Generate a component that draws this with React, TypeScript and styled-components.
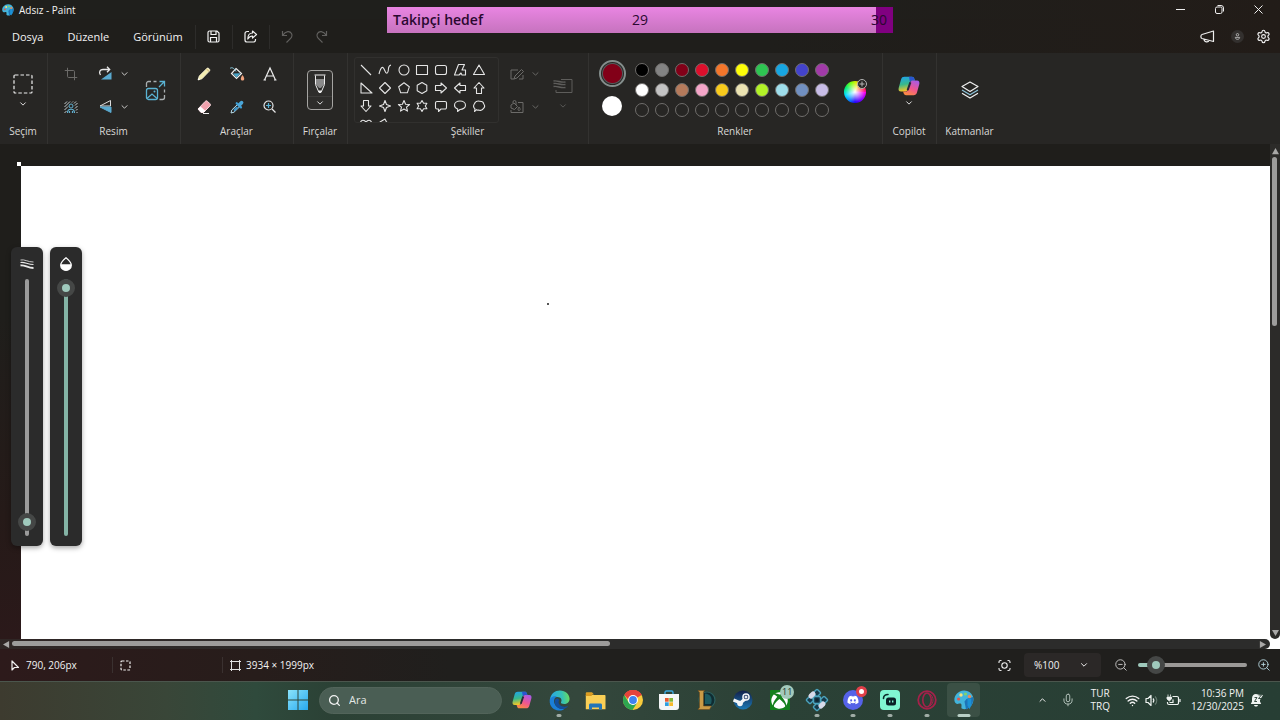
import React from "react";
import styled, { createGlobalStyle, css } from "styled-components";
import { Crop, ZoomIn, ZoomOut, Search, Settings, Mic, Wifi } from "lucide-react";
import { FaDiscord, FaXbox } from "react-icons/fa";

const GlobalStyle = createGlobalStyle`
  *, *::before, *::after { box-sizing: border-box; }
  body {
    margin: 0;
    background: #1f1e1b;
    color: #f2f2f2;
    font-family: "Open Sans", "Noto Sans", sans-serif;
    font-size: 10px;
    line-height: 14px;
    overflow: hidden;
  }
  button, select, input { font: inherit; color: inherit; margin: 0; }
`;

const Window = styled.div`
  position: relative;
  display: flex;
  flex-direction: column;
  height: 100vh;
`;

const Svg = styled.svg<{ $w?: number; $h?: number }>`
  display: block;
  flex: none;
  width: ${(p) => p.$w ?? 16}px;
  height: ${(p) => p.$h ?? p.$w ?? 16}px;
  overflow: visible;
`;

const PlainButton = styled.button`
  display: flex;
  align-items: center;
  justify-content: center;
  padding: 0;
  border: 0;
  background: none;
`;

/* ---------- title and menu bars ---------- */

const TitleBar = styled.header`
  display: flex;
  align-items: center;
  height: 19px;
  flex: none;
  padding-left: 2px;
  gap: 5px;
  background: linear-gradient(90deg, #1f1f1c 60%, #221c18);
`;

const AppTitle = styled.h1`
  margin: 0;
  flex: 1;
  font-size: 10px;
  line-height: 14px;
  font-weight: 400;
`;

const CaptionButton = styled(PlainButton)`
  width: 39px;
  height: 19px;
`;

const CaptionGroup = styled.div`
  display: flex;
  padding-right: 2px;
`;

const MenuBar = styled.nav`
  display: flex;
  align-items: center;
  flex: none;
  height: 34px;
  padding-top: 1px;
  background: linear-gradient(90deg, #1f1e1b 60%, #221c18);
`;

const MenuButton = styled(PlainButton)`
  height: 30px;
  padding: 0 12px;
  font-size: 11px;
  line-height: 16px;
`;

const QuickGroup = styled.div`
  display: flex;
  flex: 1;
`;

const QuickButton = styled(PlainButton)<{ $wide?: boolean; $divided?: boolean; $dim?: boolean }>`
  width: ${(p) => (p.$wide ? 37 : 31)}px;
  height: 24px;
  border-left: ${(p) => (p.$divided ? "1px solid #2d2c2a" : "0")};
  color: ${(p) => (p.$dim ? "#62615f" : "#f2f2f2")};
`;

const AccountGroup = styled.div`
  display: flex;
  align-items: center;
  gap: 12px;
  padding-right: 9px;
`;

const Avatar = styled(PlainButton)`
  width: 13px;
  height: 13px;
  margin-left: 4px;
  border-radius: 50%;
  background: #33302e;
`;

/* ---------- follower goal overlay ---------- */

const Goal = styled.div`
  position: absolute;
  z-index: 5;
  top: 7px;
  left: 50%;
  width: 506px;
  height: 26px;
  transform: translateX(-50%);
  background: #800080;
  color: #2a0830;
  font-size: 14px;
  line-height: 26px;
`;

const GoalFill = styled.div`
  height: 100%;
  background: linear-gradient(#e985e2, #c673be);
`;

const GoalText = styled.div`
  position: absolute;
  inset: 0;
  display: grid;
  grid-template-columns: 1fr auto 1fr;
  padding: 0 6px;

  strong { font-weight: 600; }
  span:last-child { text-align: right; }
`;

/* ---------- ribbon ---------- */

const Ribbon = styled.section`
  display: flex;
  flex: none;
  height: 91px;
  background: #272624;
`;

const Group = styled.div<{ $width: number; $last?: boolean }>`
  display: flex;
  flex-direction: column;
  flex: none;
  width: ${(p) => p.$width}px;
  padding: ${(p) => (p.$last ? "0 0 5px" : "0 1px 5px 0")};
  border-right: ${(p) => (p.$last ? "0" : "1px solid #333230")};
`;

const GroupBody = styled.div`
  display: flex;
  justify-content: center;
  flex: 1;
`;

const GroupLabel = styled.div`
  text-align: center;
  line-height: 16px;
  color: #dad9d7;
`;

const StackButton = styled(PlainButton)<{ $top?: number; $gap?: number }>`
  flex-direction: column;
  justify-content: flex-start;
  align-self: stretch;
  padding-top: ${(p) => p.$top ?? 20}px;
  gap: ${(p) => p.$gap ?? 6}px;
`;

const ToolGrid = styled.div<{ $columns: string }>`
  display: grid;
  grid-template-columns: ${(p) => p.$columns};
  grid-template-rows: 33px 33px;
  padding-top: 4px;
`;

const ToolButton = styled(PlainButton)<{ $tall?: boolean; $dim?: boolean }>`
  grid-row: ${(p) => (p.$tall ? "1 / 3" : "auto")};
  grid-column: ${(p) => (p.$tall ? "-2" : "auto")};
  color: ${(p) => (p.$dim ? "#6c6b69" : "#d2d1d0")};
`;

const BrushButton = styled(PlainButton)`
  flex-direction: column;
  width: 26px;
  height: 40px;
  margin-top: 17px;
  border: 1px solid #a5a4a2;
  border-radius: 4px;
  background: #2e2d2b;
`;

const BrushTop = styled.span`
  display: flex;
  align-items: center;
  justify-content: center;
  width: 100%;
  height: 26px;
  border-bottom: 1px solid #3c3b39;
`;

const BrushBottom = styled.span`
  display: flex;
  align-items: center;
  justify-content: center;
  height: 12px;
`;

const ShapesRow = styled.div`
  display: flex;
  flex: 1;
  padding-left: 6px;
`;

const ShapeBox = styled.div`
  display: grid;
  grid-template-columns: repeat(7, 1fr);
  grid-auto-rows: 18px;
  width: 145px;
  height: 66px;
  margin-top: 4px;
  padding: 3px 10px 0 2px;
  overflow: hidden;
  border: 1px solid #31302e;
  border-radius: 3px;
`;

const ShapeOptions = styled.div`
  margin-left: 8px;
`;

const EffectButton = styled(StackButton)`
  width: 30px;
  margin-left: 5px;
  color: #5e5d5b;
`;

const ColorRow = styled.div`
  display: flex;
  flex: 1;
  padding: 7px 0 0 9px;
`;

const CurrentColors = styled.div`
  display: flex;
  flex-direction: column;
  align-items: center;
  gap: 9px;
  width: 28px;
`;

const CurrentColor = styled.button<{ $color: string; $active?: boolean }>`
  padding: 0;
  border: 0;
  border-radius: 50%;
  background: ${(p) => p.$color};
  width: 20px;
  height: 20px;
  ${(p) =>
    p.$active &&
    css`
      width: 27px;
      height: 27px;
      border: 2px solid #848e8c;
      background: radial-gradient(circle, ${p.$color} 0 9px, #55595a 10px, #272624 11px);
    `}
`;

const Palette = styled.div`
  display: grid;
  grid-template-columns: repeat(10, 20px);
  grid-template-rows: repeat(3, 20px);
  place-items: center;
  margin-left: 6px;
`;

const Swatch = styled.button<{ $color?: string }>`
  width: 14px;
  height: 14px;
  padding: 0;
  border: 1px solid #6f6d6b;
  border-radius: 50%;
  background: ${(p) => p.$color ?? "transparent"};
`;

const WheelButton = styled(PlainButton)`
  position: relative;
  width: 24px;
  height: 26px;
  margin: 19px 0 0 11px;
`;

const Wheel = styled.span`
  width: 22px;
  height: 22px;
  border-radius: 50%;
  background:
    radial-gradient(circle, #fff 0, rgba(255, 255, 255, 0) 65%),
    conic-gradient(from 90deg, #f0e, #80f, #20f 25%, #08f, #0df 45%, #0e6, #8f0 70%, #fd0, #f40 90%, #f0a);
`;

const WheelPlus = styled.span`
  position: absolute;
  top: 0;
  right: 0;
`;

/* ---------- canvas ---------- */

const Workspace = styled.main`
  display: grid;
  grid-template-columns: 1fr 10px;
  grid-template-rows: 1fr 10px;
  flex: 1;
  min-height: 0;
  background: #fff;
`;

const Viewport = styled.div`
  position: relative;
  display: flex;
  padding: 22px 0 0 21px;
  background: linear-gradient(#1f1e1b 35%, #251a18 75%, #2b191a);
`;

const Paper = styled.div`
  position: relative;
  flex: 1;
  background: #fff;
`;

const PaperHandle = styled.span`
  position: absolute;
  top: -4px;
  left: -4px;
  width: 4px;
  height: 4px;
  background: #fff;
`;

const InkDot = styled.span`
  position: absolute;
  top: 137px;
  left: 526px;
  width: 2px;
  height: 2px;
  background: #555;
`;

const SliderPanels = styled.div`
  position: absolute;
  top: 103px;
  left: 11px;
  display: flex;
  gap: 7px;
`;

const SliderPanel = styled.label`
  display: flex;
  flex-direction: column;
  align-items: center;
  gap: 8px;
  width: 32px;
  height: 299px;
  padding: 10px 0;
  border-radius: 6px;
  background: #2b2b2b;
  box-shadow: 0 2px 5px rgba(0, 0, 0, 0.35);
`;

const thumb = css`
  appearance: none;
  width: 18px;
  height: 18px;
  border: 5px solid #454746;
  border-radius: 50%;
  background: #9fc9bc;
`;

const VerticalRange = styled.input<{ $filled?: boolean }>`
  appearance: none;
  writing-mode: vertical-lr;
  direction: rtl;
  flex: 1;
  width: 18px;
  min-height: 0;
  background: none;

  &::-webkit-slider-runnable-track {
    width: 4px;
    border-radius: 2px;
    background: ${(p) => (p.$filled ? "#84b3a5" : "#9b9b9b")};
  }
  &::-webkit-slider-thumb {
    ${thumb}
    margin-left: -7px;
  }
`;

const ZoomRange = styled.input`
  appearance: none;
  width: 109px;
  height: 18px;
  background: none;

  &::-webkit-slider-runnable-track {
    height: 4px;
    border-radius: 2px;
    background: linear-gradient(90deg, #9fc9bc 17%, #9b9997 17%);
  }
  &::-webkit-slider-thumb {
    ${thumb}
    margin-top: -7px;
  }
`;

const ScrollTrack = styled.div<{ $vertical?: boolean }>`
  display: flex;
  flex-direction: ${(p) => (p.$vertical ? "column" : "row")};
  justify-content: space-between;
  align-items: center;
  padding: ${(p) => (p.$vertical ? "4px 0 3px" : "0 4px 0 3px")};
  gap: 2px;
  background: ${(p) => (p.$vertical ? "#2c2b29" : "linear-gradient(90deg, #2f2625, #2c2c2b 30%)")};
  border-radius: ${(p) => (p.$vertical ? "0 0 5px 5px" : "0 5px 5px 0")};
`;

const ScrollLane = styled.div`
  display: flex;
  flex: 1;
  align-self: stretch;
  align-items: flex-start;
  justify-content: flex-start;
`;

const ScrollThumb = styled.div<{ $vertical?: boolean }>`
  border-radius: 3px;
  background: #9d9c9b;
  ${(p) =>
    p.$vertical
      ? css`width: 5px; height: 36%; margin-left: 2px;`
      : css`height: 5px; width: 48%; margin-top: 2px;`}
`;

/* ---------- status bar ---------- */

const StatusBar = styled.footer`
  display: flex;
  align-items: center;
  flex: none;
  height: 32px;
  background: linear-gradient(90deg, #2d1a1b, #271d1b 20%, #201f1d 35%);
`;

const StatusCell = styled.div<{ $width: number; $divided?: boolean }>`
  display: flex;
  align-items: center;
  gap: ${(p) => (p.$divided ? 5 : 6)}px;
  width: ${(p) => p.$width}px;
  height: 16px;
  padding-left: ${(p) => (p.$divided ? 7 : 9)}px;
  border-left: ${(p) => (p.$divided ? "1px solid #3a3130" : "0")};
  white-space: nowrap;
`;

const StatusRight = styled.div`
  display: flex;
  align-items: center;
  margin-left: auto;
  padding-right: 9px;
  gap: 10px;
`;

const ZoomSelectWrap = styled.span`
  position: relative;
  display: flex;
  align-items: center;
  margin: 0 3px;
`;

const ZoomSelect = styled.select`
  appearance: none;
  width: 77px;
  height: 24px;
  padding: 0 10px;
  border: 0;
  border-radius: 4px;
  background: #2b2827;
`;

const SelectArrow = styled.span`
  position: absolute;
  right: 13px;
  pointer-events: none;
`;

/* ---------- taskbar ---------- */

const Taskbar = styled.footer`
  display: grid;
  grid-template-columns: 1fr auto 1fr;
  align-items: center;
  flex: none;
  height: 39px;
  padding: 0 17px 2px 0;
  border-top: 1px solid #4b564d;
  background: linear-gradient(90deg, #3d3b2f, #394638 13%, #2f4a3c 20%, #2b4135 26%, #34473c 45%, #2b4136 60%, #273e34);
`;

const TaskCluster = styled.div`
  display: flex;
  align-items: center;
  grid-column: 2;
`;

const StartButton = styled(PlainButton)`
  width: 34px;
  height: 32px;
  margin-right: 4px;
`;

const SearchBox = styled.label`
  display: flex;
  align-items: center;
  gap: 8px;
  width: 183px;
  height: 27px;
  padding: 0 8px;
  border: 1px solid #52645a;
  border-radius: 14px;
  background: #4a5e54;

  input {
    flex: 1;
    min-width: 0;
    padding: 0;
    border: 0;
    outline: 0;
    background: none;
    font-size: 11px;
  }
  input::placeholder { color: #e3e8e5; opacity: 1; }
`;

const AppStrip = styled.div`
  display: grid;
  grid-template-columns: repeat(13, 1fr);
  width: 478px;
  margin-left: 2px;
`;

const TaskApp = styled(PlainButton)<{ $running?: boolean; $active?: boolean }>`
  position: relative;
  justify-self: center;
  width: 33px;
  height: 34px;
  border-radius: 4px;
  background: ${(p) => (p.$active ? "#3b5045" : "none")};

  &::after {
    content: "";
    position: absolute;
    bottom: 0;
    left: 50%;
    display: ${(p) => (p.$running || p.$active ? "block" : "none")};
    width: ${(p) => (p.$active ? 13 : 5)}px;
    height: 3px;
    transform: translateX(-50%);
    border-radius: 2px;
    background: ${(p) => (p.$active ? "#b9cfc6" : "#a0aca6")};
  }
`;

const Badge = styled.span<{ $red?: boolean }>`
  position: absolute;
  top: ${(p) => (p.$red ? 3 : 2)}px;
  right: ${(p) => (p.$red ? 3 : 2)}px;
  display: flex;
  align-items: center;
  justify-content: center;
  width: ${(p) => (p.$red ? 11 : 14)}px;
  height: ${(p) => (p.$red ? 11 : 14)}px;
  border: ${(p) => (p.$red ? "3px solid #e0404a" : "0")};
  border-radius: 50%;
  background: ${(p) => (p.$red ? "#fff" : "#a3c9bb")};
  color: #22352c;
  font-size: 9px;
  line-height: 12px;
`;

const Tray = styled.div`
  display: flex;
  align-items: center;
  justify-self: end;
  gap: 6px;
`;

const TrayButton = styled(PlainButton)<{ $width?: number }>`
  width: ${(p) => p.$width ?? 14}px;
  height: 28px;
`;

const TrayText = styled.div<{ $end?: boolean }>`
  display: flex;
  flex-direction: column;
  align-items: ${(p) => (p.$end ? "flex-end" : "center")};
  margin: ${(p) => (p.$end ? "0" : "0 9px 0 5px")};
  line-height: 13px;
`;

/* ---------- drawings ---------- */

const Chevron = ({ up, size = 7 }: { up?: boolean; size?: number }) => (
  <Svg $w={size} $h={4} viewBox="0 0 8 5" fill="none" stroke="currentColor" strokeWidth="1.2">
    <path d={up ? "M.5 4.5 4 1l3.5 3.5" : "M.5.5 4 4 7.5.5"} />
  </Svg>
);

const PaintIcon = ({ size }: { size: number }) => (
  <Svg $w={size} viewBox="0 0 20 20">
    <path d="M10 .6C4 1 0 5.600 .4 10.500c.3 3 2.600 3.900 4.600 3.100 1.500-.6 2.600.1 2.500 1.500L7.400 18c.5 1.600 5.600 1.600 7.600-.5 4-2.500 5.500-8 3.700-11.500C17 2.500 14 .4 10 .6Z" fill="#42b4dc" />
    <path d="M12.500 9 19 7c1 5-1.500 9-4 10.500l-3 2-1.500-8Z" fill="#1d74b8" />
    <path d="M13.500 8.500h3.800v6.800l-1.800 4-2-4Z" fill="#1b92d6" />
    <circle cx="4.600" cy="9" r="1.600" fill="#e2574c" />
    <circle cx="7" cy="5" r="1.700" fill="#f5e27a" />
    <circle cx="11.500" cy="4" r="1.600" fill="#83d36a" />
    <circle cx="15.500" cy="6.500" r="1.700" fill="#e98a58" />
  </Svg>
);

const CopilotIcon = ({ size }: { size: number }) => (
  <Svg $w={size} viewBox="0 0 24 24">
    <defs>
      <linearGradient id="cpA" x1="0" y1="0" x2="0.2" y2="1">
        <stop offset="0" stopColor="#1ea2f0" />
        <stop offset=".55" stopColor="#37b98c" />
        <stop offset="1" stopColor="#f6c626" />
      </linearGradient>
      <linearGradient id="cpB" x1="0.8" y1="0" x2="0.3" y2="1">
        <stop offset="0" stopColor="#a65be8" />
        <stop offset=".55" stopColor="#f0568f" />
        <stop offset="1" stopColor="#fb8a43" />
      </linearGradient>
    </defs>
    <path d="M7 2h8.200c1.600 0 2.200.8 2.700 2.300L18.500 6H16c-2 0-2.800 1-3.400 2.800l-2 6.700C10 17.500 9.200 18 7.500 18H3.300C.8 18 .2 16 .8 13.800l2.500-9C4 2.800 5 2 7 2Z" fill="url(#cpA)" />
    <path d="M12 2h3.300c1.500 0 2.200.8 2.600 2.300L18.500 6H16c-1.500 0-2.400.6-3 1.800Z" fill="#2a55cf" />
    <path d="M17 22H8.800c-1.600 0-2.200-.8-2.700-2.300L5.500 18H8c2 0 2.800-1 3.400-2.800l2-6.700C14 6.500 14.800 6 16.500 6h4.200c2.500 0 3.100 2 2.500 4.200l-2.500 9C20 21.200 19 22 17 22Z" fill="url(#cpB)" />
    <path d="m13.500 8-3 8.500" stroke="#252a38" strokeWidth="2.200" />
  </Svg>
);

const shapePaths: [string, string][] = [
  ["Çizgi", "M2 2l10 10"],
  ["Eğri", "M1 11C3 3 5 3 6.500 7s3.500 5 4-1.500c.1-2 .8-3 2.500-3.500"],
  ["Oval", "M7 2a5 5 0 1 0 0 10A5 5 0 1 0 7 2Z"],
  ["Dikdörtgen", "M1.500 2.500h11v9h-11Z"],
  ["Yuvarlatılmış dikdörtgen", "M3.500 2.500h7a2 2 0 0 1 2 2v5a2 2 0 0 1-2 2h-7a2 2 0 0 1-2-2v-5a2 2 0 0 1 2-2Z"],
  ["Çokgen", "M5.500 1.500h6l-2.500 5.500h3.500v5h-3.500l-1-2-2 2h-4.500Z"],
  ["Üçgen", "M7 2l5.500 9.500h-11Z"],
  ["Dik üçgen", "M2 2v10h11Z"],
  ["Elmas", "M7 1.500 12.500 7 7 12.500 1.500 7Z"],
  ["Beşgen", "M7 1.800l5.300 4-2 6h-6.600l-2-6Z"],
  ["Altıgen", "M7 1.500l4.800 2.700v5.600L7 12.500 2.200 9.800V4.200Z"],
  ["Sağ ok", "M1.500 4.500h5.500V2l5.500 5L7 12V9.500H1.500Z"],
  ["Sol ok", "M12.500 4.500H7V2L1.500 7 7 12V9.500h5.500Z"],
  ["Yukarı ok", "M4.500 12.500V7H2l5-5.500L12 7H9.500v5.500Z"],
  ["Aşağı ok", "M4.500 1.500V7H2l5 5.500L12 7H9.500V1.500Z"],
  ["Dört köşeli yıldız", "M7 1.500l1.500 4 4 1.500-4 1.500-1.500 4-1.500-4-4-1.500 4-1.500Z"],
  ["Beş köşeli yıldız", "M7 1.500l1.600 3.700 4 .3-3.100 2.600 1 4L7 10l-3.500 2.100 1-4L1.400 5.500l4-.3Z"],
  ["Altı köşeli yıldız", "M7 1.500l1.600 2.800h3.300L10.300 7l1.600 2.700H8.600L7 12.500 5.400 9.700H2.100L3.700 7 2.100 4.300h3.300Z"],
  ["Yuvarlak belirtme", "M3 2.500h8a1.500 1.500 0 0 1 1.500 1.500v4.500A1.500 1.500 0 0 1 11 10H7l-2.500 2.500V10H3a1.500 1.500 0 0 1-1.500-1.500V4A1.500 1.500 0 0 1 3 2.500Z"],
  ["Oval belirtme", "M7 2c3 0 5.500 1.800 5.500 4.200S10 10.500 7 10.500L4.500 12.500 4.700 10C2.800 9.300 1.500 8 1.500 6.200 1.500 3.800 4 2 7 2Z"],
  ["Bulut belirtme", "M2.500 12.500l.5-2.700C1.500 8.500 1.300 6.500 2.300 5 3 2.700 5.500 1.700 7.500 2.200c2-.1 4 1 4.300 2.800 1.100 1.500.8 3.500-.4 4.500-.9 1.700-3.400 2.300-4.900 1.500-1.100.3-1.600.2-1.900-.3Z"],
  ["Kalp", "M7 12.500 2 7.500C.5 5 3 2.500 5 3.500l2 1.200 2-1.200c2-1 4.500 1.500 3 4Z"],
  ["Şimşek", "M2 5l5-3 1.500 3 3 2-1 1 2 4-6-4 1-1-3-1Z"],
];

const ShapeIcon = ({ d }: { d: string }) => (
  <Svg $w={14} viewBox="0 0 14 14" fill="none" stroke="#e4e4e4" strokeWidth="1.100" strokeLinejoin="round">
    <path d={d} />
  </Svg>
);

const PencilIcon = () => (
  <Svg $w={16} viewBox="0 0 16 16">
    <path d="m2 14 1.200-4L11 2.200c1-1 3.600 1.400 2.700 2.600L6 12.800Z" fill="#f3ecb0" stroke="#fffbe0" strokeWidth=".7" />
    <path d="m10.500 3 2.700 2.600" stroke="#c8a970" />
    <path d="m2 14 .6-2 1.500 1.400Z" fill="#fff" />
  </Svg>
);

const BucketIcon = () => (
  <Svg $w={16} viewBox="0 0 16 16" fill="none">
    <path d="M7 2.500 12.500 7.500l-5 5L2.500 7.500Z" stroke="#eee" strokeWidth="1.200" />
    <path d="m4 7.500 7.500-.2L7.500 11.500Z" fill="#49a5c9" />
    <path d="M1 2.500c1.500-1.500 4-.8 6 3" stroke="#8ccbe0" />
    <path d="M13.500 9c2.800 3.800 1.700 5.500 0 5.500s-2.800-1.700 0-5.500Z" fill="#f0a37e" />
  </Svg>
);

const EraserIcon = () => (
  <Svg $w={16} viewBox="0 0 16 16">
    <path d="m2 10 7.200-7.600c.8-.8 1.600-.8 2.400 0l2.300 2.300c.8.8.8 1.600 0 2.400L7.500 13.500H5Z" fill="#f1a2ae" stroke="#f9d8dd" />
    <path d="m2 10 2.500-2.500 5 4.500-2 1.500H5Z" fill="#fff" />
    <path d="M7 14.500h6" stroke="#eee" />
  </Svg>
);

const DropperIcon = () => (
  <Svg $w={16} viewBox="0 0 16 16" fill="none">
    <path d="m2 14 .8-3L9 5l2.200 2.200-6.200 6Z" stroke="#b8dcea" />
    <path d="m4.500 10.500 3-3 2 1.500-4 3.500Z" fill="#3b94c9" />
    <path d="m7.700 4.200 4.300 4.200" stroke="#3d9fd6" strokeWidth="2.200" strokeLinecap="round" />
    <path d="m10.300 6 2.200-2.300" stroke="#4ba6d8" strokeWidth="3.800" strokeLinecap="round" />
  </Svg>
);

const RotateIcon = () => (
  <Svg $w={15} viewBox="0 0 15 15" fill="none">
    <path d="M2.500 9C.5 6 2 3.500 5 3.500h6.500M9 .8l2.700 2.700L9 6.200" stroke="#e8e8e8" strokeWidth="1.300" />
    <path d="M13.500 6v7.500H3Z" fill="#5aa9cf" />
  </Svg>
);

const FlipIcon = () => (
  <Svg $w={15} viewBox="0 0 15 15" fill="none">
    <path d="M12.500 1.500v5.500H2Z" stroke="#dcdcdc" strokeLinejoin="round" />
    <path d="M2 8h11v5.500Z" fill="#5aa9cf" stroke="#5aa9cf" strokeLinejoin="round" />
  </Svg>
);

const RemoveBgIcon = () => (
  <Svg $w={16} viewBox="0 0 16 16" fill="none" stroke="#c3cdd0" strokeWidth="1">
    <path d="m1.500 5 2.500-2.500M1.500 8l5.500-5.500M1.500 11l3.500-3.500M1.500 14l2-2M9 3.500l1-1M11 4.500l2-2M12 6.500l2.500-2.500M12 9.500l2.500-2.500M13 11.500l1.500-1.500M13.500 14l1-1" />
    <circle cx="8" cy="7" r="2" stroke="#62b0d0" />
    <path d="M4.500 14c0-5 7-5 7 0M6.500 12v2m3-2v2" stroke="#62b0d0" strokeWidth="1.200" />
  </Svg>
);

const ResizeIcon = () => (
  <Svg $w={21} viewBox="0 0 21 21" fill="none">
    <path d="M1.500 7V3.500a2 2 0 0 1 2-2H6m2.500 0h3m8 8v3m0 2.500v2.500a2 2 0 0 1-2 2h-3" stroke="#a9aeb0" strokeWidth="1.300" />
    <rect x="1.500" y="8.500" width="11" height="11" rx="2" stroke="#5ab3d3" strokeWidth="1.300" />
    <path d="m2 18.500 5-4.500 5 4.500M14 7l5-5m-4.500-.5h5v5" stroke="#5ab3d3" strokeWidth="1.300" />
    <circle cx="9.500" cy="11.500" r="1" fill="#5ab3d3" />
  </Svg>
);

const BrushIcon = () => (
  <Svg $w={14} $h={20} viewBox="0 0 14 20" fill="none" stroke="#ededed">
    <path d="M1.500 1h11M2.500 1.500v9L6 18.500h2l3.500-8v-9" />
    <path d="M3 5h8v5.800L7.800 14H6.200L3 10.800Z" fill="#8a8a8a" stroke="none" />
    <path d="m5.500 17 1.500 1.500L8.500 17Z" fill="#fff" />
  </Svg>
);

const LayersIcon = () => (
  <Svg $w={18} viewBox="0 0 18 18" fill="none" strokeWidth="1.200" strokeLinejoin="round">
    <path d="M9 1 17 5.500 9 10.500 1 5.500Z" stroke="#f0f0f0" />
    <path d="m1 9 8 4.800L17 9" stroke="#8dc5dc" />
    <path d="m1 12.300 8 4.800 8-4.800" stroke="#f0f0f0" />
  </Svg>
);

const SelectionIcon = ({ size, dash }: { size: number; dash: string }) => (
  <Svg $w={size} viewBox={`0 0 ${size} ${size}`} fill="none" stroke="#f0f0f0" strokeWidth="1.200">
    <rect x="1" y="1" width={size - 2} height={size - 2} rx="1" strokeDasharray={dash} />
  </Svg>
);

const Arrow = ({ d }: { d: string }) => (
  <Svg $w={7} viewBox="0 0 8 8" fill="#a9a8a7">
    <path d={d} />
  </Svg>
);

const EdgeIcon = () => (
  <Svg $w={21} viewBox="0 0 24 24">
    <defs>
      <linearGradient id="edA" x1="0" y1=".3" x2="1" y2=".2">
        <stop offset="0" stopColor="#2aa6e4" />
        <stop offset=".6" stopColor="#35c1b6" />
        <stop offset="1" stopColor="#6ddf58" />
      </linearGradient>
    </defs>
    <path d="M1 11C2 4 7 .5 12.500 .5 19 .5 23.500 5 23.500 10c0 4-3 6-6.200 6-2.500 0-4.300-1-3.500-2.300 1.400-2 .2-5.700-4.300-5.700C5.500 8 2 9.500 1 11Z" fill="url(#edA)" />
    <path d="M.8 12C1 8.500 5 6.500 9 7.500c-3 1.500-4 5-2.500 8.500 2 4.500 7 6.500 11.500 5-2 2-4.500 2.700-7 2.500C5 23 .5 18.500.8 12Z" fill="#1b7fd8" />
    <path d="M7 11c-1.500 4 1 9 6 10.300 4 1 7.500-.6 8.800-3-3 1.500-8.500 1.200-10.300-2.300-1-2-.5-3.500.3-4.500C11 9.500 8.500 9 7 11Z" fill="#124e9c" />
  </Svg>
);

const FolderIcon = () => (
  <Svg $w={21} viewBox="0 0 21 21">
    <path d="M.8 3.500c0-.8.5-1.300 1.200-1.300h5l2 2.300h-8Z" fill="#e0a326" />
    <path d="M.8 5h18.700c.6 0 1 .4 1 1v13.200H.8Z" fill="#f9cf56" />
    <path d="M.8 3.500h7L6.500 6H.8Z" fill="#d99a20" />
    <path d="M4 19.500V15c0-1 .6-1.600 1.500-1.600h10c1 0 1.500.6 1.500 1.600v4.500h-3v-2H7v2Z" fill="#2375b8" />
  </Svg>
);

const ChromeIcon = () => (
  <Svg $w={20} viewBox="0 0 20 20">
    <circle cx="10" cy="10" r="10" fill="#f8cb3c" />
    <path d="M10 10 1.300 5A10 10 0 0 1 18.700 5Z" fill="#e5433b" />
    <path d="M10 5h8.700A10 10 0 0 0 1.300 5l4.500 5Z" fill="#e5433b" />
    <path d="M1.300 5A10 10 0 0 0 9.500 20L14.300 12.500 10 14.500 5.700 12.500Z" fill="#2da650" />
    <circle cx="10" cy="10" r="5" fill="#fff" />
    <circle cx="10" cy="10" r="3.900" fill="#3f82ef" />
  </Svg>
);

const StoreIcon = () => (
  <Svg $w={20} viewBox="0 0 20 20">
    <path d="M6 5V2.500C6 1.500 6.500 1 7.500 1h5c1 0 1.500.5 1.500 1.500V5" fill="none" stroke="#3aa6dd" strokeWidth="1.400" />
    <path d="M0 4h20v13a3 3 0 0 1-3 3H3a3 3 0 0 1-3-3Z" fill="#f4f6f7" />
    <path d="M6 8h3.700v3.700H6Z" fill="#e8592f" />
    <path d="M10.300 8H14v3.700h-3.700Z" fill="#7fb536" />
    <path d="M6 12.300h3.700V16H6Z" fill="#2e9fe0" />
    <path d="M10.300 12.300H14V16h-3.700Z" fill="#f6b92b" />
  </Svg>
);

const LeagueIcon = () => (
  <Svg $w={20} viewBox="0 0 20 20">
    <circle cx="11" cy="10" r="8" fill="#0f2c32" stroke="#2c5f5e" strokeWidth="1.200" />
    <path d="M9 3.500c5 .5 8 4 6 10.500H9Z" fill="#1d5a60" />
    <path d="M2 .5h6.500L7.500 2v14h8L13.500 19.500H2L3.500 17.500V2.500Z" fill="#c99a47" stroke="#6d4c1c" strokeWidth=".6" />
  </Svg>
);

const SteamIcon = () => (
  <Svg $w={20} viewBox="0 0 20 20">
    <defs>
      <linearGradient id="stA" x1="0" y1="0" x2="0" y2="1">
        <stop offset="0" stopColor="#13204a" />
        <stop offset="1" stopColor="#1b78b4" />
      </linearGradient>
    </defs>
    <circle cx="10" cy="10" r="9.500" fill="url(#stA)" />
    <path d="m.5 10 7 3 5-4.500" stroke="#f2f4f7" strokeWidth="3.200" fill="none" />
    <circle cx="7" cy="13.500" r="2.800" fill="#f2f4f7" />
    <circle cx="13" cy="7" r="3.800" fill="#f2f4f7" />
    <circle cx="13" cy="7" r="2.300" fill="#1d315f" />
    <circle cx="13" cy="7" r="1.500" fill="#e9edf2" />
  </Svg>
);

const KnotIcon = () => (
  <Svg $w={22} viewBox="0 0 22 22">
    <g fill="#173a4a" stroke="#4ba3bd" strokeWidth="1.400">
      <rect x="8.200" y="1.200" width="5.600" height="5.600" rx="1" transform="rotate(45 11 4)" />
      <rect x="15.200" y="8.200" width="5.600" height="5.600" rx="1" transform="rotate(45 18 11)" />
      <rect x="8.200" y="15.200" width="5.600" height="5.600" rx="1" transform="rotate(45 11 18)" />
      <rect x="1.200" y="8.200" width="5.600" height="5.600" rx="1" transform="rotate(45 4 11)" />
      <rect x="7.500" y="7.500" width="7" height="7" rx="1.500" />
    </g>
    <rect x="2" y="3.500" width="8" height="5" rx="2.500" transform="rotate(-45 6 6)" fill="#d7dbea" />
    <rect x="12" y="13.500" width="8" height="5" rx="2.500" transform="rotate(-45 16 16)" fill="#d7dbea" />
    <circle cx="11" cy="11" r="1.700" fill="#0f2530" />
  </Svg>
);

const DiscordTile = styled.span`
  display: flex;
  align-items: center;
  justify-content: center;
  width: 20px;
  height: 20px;
  border-radius: 50%;
  background: #5562e8;
  color: #fff;
  font-size: 12px;
`;

const XboxTile = styled.span`
  display: flex;
  align-items: center;
  justify-content: center;
  width: 20px;
  height: 20px;
  border-radius: 1px;
  background: #14801c;
  color: #fff;
  font-size: 17px;
`;

const StreamlabsIcon = () => (
  <Svg $w={20} viewBox="0 0 20 20">
    <rect width="20" height="20" rx="4" fill="#80f5d2" />
    <path d="M3.500 8.500C3.500 6 5 4.500 8 4.500" fill="none" stroke="#0c2b2b" strokeWidth="1.600" strokeLinecap="round" />
    <rect x="6" y="7.500" width="10" height="8" rx="2.500" fill="#0a1f26" />
    <path d="M9.700 10.500v2m3-2v2" stroke="#80f5d2" strokeWidth="1.400" />
  </Svg>
);

const OperaIcon = () => (
  <Svg $w={20} viewBox="0 0 20 20" fill="none" stroke="#a5214a">
    <circle cx="10" cy="10" r="8.800" strokeWidth="1.800" />
    <ellipse cx="10" cy="10" rx="4.200" ry="7" strokeWidth="1.600" />
    <path d="M13 4c4 2.500 4 9.500 0 12" strokeWidth="1" />
  </Svg>
);

const WindowsIcon = () => (
  <Svg $w={20} viewBox="0 0 20 20">
    <defs>
      <linearGradient id="wn" x1="0" y1="0" x2="1" y2="1">
        <stop offset="0" stopColor="#8be3fb" />
        <stop offset="1" stopColor="#27a9ef" />
      </linearGradient>
    </defs>
    <path d="M0 0h9.500v9.500H0ZM10.500 0H20v9.500h-9.500ZM0 10.500h9.500V20H0ZM10.500 10.500H20V20h-9.500Z" fill="url(#wn)" />
  </Svg>
);

const colors: (string | undefined)[] = [
  "#000000", "#838383", "#820018", "#dd0f2c", "#f4762b", "#fdfd08", "#2ec552", "#17a6e2", "#4343cc", "#a13aa8",
  "#ffffff", "#c3c3c3", "#b57a5b", "#f4a5c8", "#f9cb1c", "#ebe3b2", "#b2f227", "#9fdeeb", "#7190c1", "#c8bde7",
  ...Array<undefined>(10).fill(undefined),
];

const taskApps: { name: string; icon: React.ReactNode; running?: boolean; active?: boolean }[] = [
  { name: "Copilot", icon: <CopilotIcon size={20} /> },
  { name: "Edge", icon: <EdgeIcon />, running: true },
  { name: "Dosya Gezgini", icon: <FolderIcon /> },
  { name: "Chrome", icon: <ChromeIcon /> },
  { name: "Store", icon: <StoreIcon /> },
  { name: "League of Legends", icon: <LeagueIcon /> },
  { name: "Steam", icon: <SteamIcon /> },
  { name: "Xbox", icon: <><XboxTile><FaXbox /></XboxTile><Badge>11</Badge></> },
  { name: "Uygulama", icon: <KnotIcon />, running: true },
  { name: "Discord", icon: <><DiscordTile><FaDiscord /></DiscordTile><Badge $red /></>, running: true },
  { name: "Streamlabs", icon: <StreamlabsIcon />, running: true },
  { name: "Opera GX", icon: <OperaIcon />, running: true },
  { name: "Paint", icon: <PaintIcon size={20} />, active: true },
];

/* ---------- page ---------- */

function RibbonBar() {
  return (
    <Ribbon>
      <Group $width={48}>
        <GroupBody>
          <StackButton aria-label="Seçim" $top={21} $gap={8}>
            <SelectionIcon size={20} dash="3.500 2" />
            <Chevron size={6} />
          </StackButton>
        </GroupBody>
        <GroupLabel>Seçim</GroupLabel>
      </Group>

      <Group $width={133}>
        <GroupBody>
          <ToolGrid $columns="46px 22px 16px 47px">
            <ToolButton $dim aria-label="Kırp"><Crop size={14} strokeWidth={1.700} /></ToolButton>
            <ToolButton aria-label="Döndür"><RotateIcon /></ToolButton>
            <ToolButton aria-label="Döndürme seçenekleri"><Chevron /></ToolButton>
            <ToolButton $tall aria-label="Yeniden boyutlandır"><ResizeIcon /></ToolButton>
            <ToolButton aria-label="Arka planı kaldır"><RemoveBgIcon /></ToolButton>
            <ToolButton aria-label="Çevir"><FlipIcon /></ToolButton>
            <ToolButton aria-label="Çevirme seçenekleri"><Chevron /></ToolButton>
          </ToolGrid>
        </GroupBody>
        <GroupLabel>Resim</GroupLabel>
      </Group>

      <Group $width={113}>
        <GroupBody>
          <ToolGrid $columns="33px 33px 33px">
            <ToolButton aria-label="Kalem"><PencilIcon /></ToolButton>
            <ToolButton aria-label="Dolgu"><BucketIcon /></ToolButton>
            <ToolButton aria-label="Metin">
              <Svg $w={14} viewBox="0 0 14 14" fill="none" stroke="#ececec" strokeWidth="1.200">
                <path d="M1.500 13 7 1l5.500 12M3.500 9h7M.5 13h2.500m8 0h2.500" />
              </Svg>
            </ToolButton>
            <ToolButton aria-label="Silgi"><EraserIcon /></ToolButton>
            <ToolButton aria-label="Renk seçici"><DropperIcon /></ToolButton>
            <ToolButton aria-label="Büyüteç">
              <Svg $w={13} viewBox="0 0 13 13" fill="none" stroke="#e8e8e8" strokeWidth="1.200">
                <circle cx="5.500" cy="5.500" r="4.500" />
                <path d="m9 9 3.500 3.500" />
                <path d="M3 5.500h5M5.500 3v5" stroke="#56b4d8" />
              </Svg>
            </ToolButton>
          </ToolGrid>
        </GroupBody>
        <GroupLabel>Araçlar</GroupLabel>
      </Group>

      <Group $width={54}>
        <GroupBody>
          <BrushButton aria-label="Fırçalar">
            <BrushTop><BrushIcon /></BrushTop>
            <BrushBottom><Chevron size={6} /></BrushBottom>
          </BrushButton>
        </GroupBody>
        <GroupLabel>Fırçalar</GroupLabel>
      </Group>

      <Group $width={241}>
        <ShapesRow>
          <ShapeBox>
            {shapePaths.map(([name, d]) => (
              <PlainButton key={name} aria-label={name}><ShapeIcon d={d} /></PlainButton>
            ))}
          </ShapeBox>
          <ShapeOptions>
            <ToolGrid $columns="20px 16px">
              <ToolButton $dim aria-label="Anahat">
                <Svg $w={14} viewBox="0 0 14 14" fill="none" stroke="currentColor">
                  <path d="M8 3H1v9h3m9-4v4H9M4 12l1-3 6.500-6.500 2 2L7 11Z" />
                </Svg>
              </ToolButton>
              <ToolButton $dim aria-label="Anahat seçenekleri"><Chevron /></ToolButton>
              <ToolButton $dim aria-label="Dolgu biçimi">
                <Svg $w={14} viewBox="0 0 14 14" fill="none" stroke="currentColor">
                  <path d="M8 2.500h5v10H1V10M3 3v-1a1.500 1.500 0 0 1 3 0v3M1 5l3-2 3.500 3.500L4.500 9.500 1 8Zm8 2c2 2.500 1 3.500 0 3.500S7.500 9.500 9 7Z" />
                </Svg>
              </ToolButton>
              <ToolButton $dim aria-label="Dolgu seçenekleri"><Chevron /></ToolButton>
            </ToolGrid>
          </ShapeOptions>
          <EffectButton aria-label="Boyut" $top={25} $gap={10}>
            <Svg $w={20} $h={16} viewBox="0 0 20 16" fill="none" stroke="currentColor">
              <path d="M8 1.500h11v13H3V12" />
              <path d="M.5 3c4-1 7 2 12 1M.5 5.500c4-1 7 2 12 1M.5 8.500c4-1 7 2 12 1" strokeWidth="1.400" />
            </Svg>
            <Chevron size={6} />
          </EffectButton>
        </ShapesRow>
        <GroupLabel>Şekiller</GroupLabel>
      </Group>

      <Group $width={294}>
        <ColorRow>
          <CurrentColors>
            <CurrentColor $color="#820018" $active aria-label="Renk 1" />
            <CurrentColor $color="#ffffff" aria-label="Renk 2" />
          </CurrentColors>
          <Palette>
            {colors.map((c, i) => <Swatch key={i} $color={c} aria-label={`Palet ${i + 1}`} />)}
          </Palette>
          <WheelButton aria-label="Renkleri düzenle">
            <Wheel />
            <WheelPlus>
              <Svg $w={10} viewBox="0 0 10 10" fill="#272624" stroke="#b5b5b5">
                <circle cx="5" cy="5" r="4.500" />
                <path d="M2.500 5h5M5 2.500v5" />
              </Svg>
            </WheelPlus>
          </WheelButton>
        </ColorRow>
        <GroupLabel>Renkler</GroupLabel>
      </Group>

      <Group $width={54}>
        <GroupBody>
          <StackButton aria-label="Copilot" $top={22} $gap={4}>
            <CopilotIcon size={22} />
            <Chevron size={6} />
          </StackButton>
        </GroupBody>
        <GroupLabel>Copilot</GroupLabel>
      </Group>

      <Group $width={65} $last>
        <GroupBody>
          <StackButton aria-label="Katmanlar" $top={28}><LayersIcon /></StackButton>
        </GroupBody>
        <GroupLabel>Katmanlar</GroupLabel>
      </Group>
    </Ribbon>
  );
}

export default function App() {
  return (
    <Window>
      <GlobalStyle />
      <TitleBar>
        <PaintIcon size={12} />
        <AppTitle>Adsız - Paint</AppTitle>
        <CaptionGroup>
          <CaptionButton aria-label="Simge durumuna küçült">
            <Svg $w={9} viewBox="0 0 9 9" stroke="#eee"><path d="M0 4.500h9" /></Svg>
          </CaptionButton>
          <CaptionButton aria-label="Önceki boyut">
            <Svg $w={9} viewBox="0 0 9 9" fill="none" stroke="#eee">
              <rect x=".5" y="2" width="6.500" height="6.500" rx="1.500" />
              <path d="M2.500.5H6a2.500 2.500 0 0 1 2.500 2.500v3.500" />
            </Svg>
          </CaptionButton>
          <CaptionButton aria-label="Kapat">
            <Svg $w={9} viewBox="0 0 9 9" stroke="#eee"><path d="m.5.5 8 8m0-8-8 8" /></Svg>
          </CaptionButton>
        </CaptionGroup>
      </TitleBar>

      <MenuBar>
        <MenuButton>Dosya</MenuButton>
        <MenuButton>Düzenle</MenuButton>
        <MenuButton>Görünüm</MenuButton>
        <QuickGroup>
          <QuickButton $wide $divided aria-label="Kaydet">
            <Svg $w={13} viewBox="0 0 13 13" fill="none" stroke="currentColor" strokeWidth="1.200">
              <path d="M2.500 1h7.500l2 2v7.500a1.500 1.500 0 0 1-1.500 1.500h-8A1.500 1.500 0 0 1 1 10.500v-8A1.500 1.500 0 0 1 2.500 1ZM4 1v3.500h5V1M3.500 12V7.500h6V12" />
            </Svg>
          </QuickButton>
          <QuickButton $wide $divided aria-label="Paylaş">
            <Svg $w={13} viewBox="0 0 13 13" fill="none" stroke="currentColor" strokeWidth="1.200" strokeLinejoin="round">
              <path d="M5 1.500H3A2 2 0 0 0 1 3.500V10a2 2 0 0 0 2 2h6.500a2 2 0 0 0 2-2V9" />
              <path d="M8.500 1 12.500 4.500l-4 3.500V6C6 6 5 7 3.800 9c0-3.500 1.700-6 4.700-6Z" />
            </Svg>
          </QuickButton>
          <QuickButton $wide $divided $dim aria-label="Geri al">
            <Svg $w={13} viewBox="0 0 13 13" fill="none" stroke="currentColor" strokeWidth="1.200">
              <path d="M1.500 1v4.500H6M1.500 5.500C5 .5 9 1 10.500 3.500 12 6 11 7.500 5.500 12.500" />
            </Svg>
          </QuickButton>
          <QuickButton $dim aria-label="Yinele">
            <Svg $w={13} viewBox="0 0 13 13" fill="none" stroke="currentColor" strokeWidth="1.200">
              <path d="M11.500 1v4.500H7M11.500 5.500C8 .5 4 1 2.500 3.500 1 6 2 7.500 7.500 12.500" />
            </Svg>
          </QuickButton>
        </QuickGroup>
        <AccountGroup>
          <PlainButton aria-label="Geri bildirim">
            <Svg $w={15} viewBox="0 0 15 15" fill="none" stroke="#eee" strokeWidth="1.200" strokeLinejoin="round">
              <path d="M13.500 2v10.500L2 9.500C.5 9 .5 6 2 5.500ZM4 10c0 3.500 4.500 3.500 5 1.300" />
            </Svg>
          </PlainButton>
          <Avatar aria-label="Hesap">
            <Svg $w={7} viewBox="0 0 8 8" fill="none" stroke="#bbb">
              <circle cx="4" cy="2" r="1.400" />
              <path d="M1.500 5h5c0 3-5 3-5 0Z" />
            </Svg>
          </Avatar>
          <PlainButton aria-label="Ayarlar"><Settings size={15} strokeWidth={1.800} /></PlainButton>
        </AccountGroup>
      </MenuBar>

      <Goal>
        <GoalFill style={{ width: `${(29 / 30) * 100}%` }} />
        <GoalText>
          <strong>Takipçi hedef</strong>
          <span>29</span>
          <span>30</span>
        </GoalText>
      </Goal>

      <RibbonBar />

      <Workspace>
        <Viewport>
          <Paper>
            <PaperHandle />
            <InkDot />
          </Paper>
          <SliderPanels>
            <SliderPanel>
              <Svg $w={14} viewBox="0 0 14 14" fill="none" stroke="#e9e9e9">
                <path d="M.5 3c4-1 7 2 13 2" strokeWidth=".8" />
                <path d="M.5 5.500c4-1 7 2 13 2" strokeWidth="1.200" />
                <path d="M.5 8.500c4-1 7 2.500 13 2.500" strokeWidth="1.900" />
              </Svg>
              <VerticalRange type="range" aria-label="Boyut" min={0} max={100} defaultValue={2} />
            </SliderPanel>
            <SliderPanel>
              <Svg $w={14} viewBox="0 0 14 14">
                <path d="M7 .8c3.700 3 5.300 4.800 5.300 7.400a5.300 5.300 0 0 1-10.600 0C1.700 5.600 3.300 3.800 7 .8Z" fill="none" stroke="#fff" strokeWidth="1.200" />
                <path d="M1.700 7.200h10.600c.3 3.600-2.200 6.300-5.300 6.300s-5.600-2.700-5.300-6.300Z" fill="#fff" />
              </Svg>
              <VerticalRange $filled type="range" aria-label="Opaklık" min={0} max={100} defaultValue={100} />
            </SliderPanel>
          </SliderPanels>
        </Viewport>
        <ScrollTrack $vertical>
          <Arrow d="M4 0l4 7H0Z" />
          <ScrollLane><ScrollThumb $vertical /></ScrollLane>
          <Arrow d="M4 8l4-7H0Z" />
        </ScrollTrack>
        <ScrollTrack>
          <Arrow d="M0 4l7-4v8Z" />
          <ScrollLane><ScrollThumb /></ScrollLane>
          <Arrow d="M8 4L1 0v8Z" />
        </ScrollTrack>
      </Workspace>

      <StatusBar>
        <StatusCell $width={112}>
          <Svg $w={11} viewBox="0 0 11 11" fill="none" stroke="#f0f0f0" strokeWidth="1.200" strokeLinejoin="round">
            <path d="M3 1v9l2.500-2.500H9.500Z" />
          </Svg>
          <span>790, 206px</span>
        </StatusCell>
        <StatusCell $width={110} $divided>
          <SelectionIcon size={11} dash="2.500 1.500" />
        </StatusCell>
        <StatusCell $width={110} $divided>
          <Svg $w={11} viewBox="0 0 11 11" fill="none" stroke="#e2e2e2">
            <path d="M0 1.500h11M0 9.500h11M1.500 0v11M9.500 0v11" />
          </Svg>
          <span>3934 × 1999px</span>
        </StatusCell>
        <StatusRight>
          <PlainButton aria-label="Pencereye sığdır">
            <Svg $w={13} viewBox="0 0 13 13" fill="none" stroke="#eee" strokeWidth="1.100">
              <path d="M1 4V3a1.500 1.500 0 0 1 1.500-1.500h1M9.500 1.500h1A1.500 1.500 0 0 1 12 3v1M12 9v1a1.500 1.500 0 0 1-1.500 1.500h-1M3.500 11.500h-1A1.500 1.500 0 0 1 1 10V9" />
              <circle cx="6.500" cy="6.500" r="2.700" />
            </Svg>
          </PlainButton>
          <ZoomSelectWrap>
            <ZoomSelect aria-label="Yakınlaştırma" defaultValue="100">
              <option value="100">%100</option>
            </ZoomSelect>
            <SelectArrow><Chevron size={8} /></SelectArrow>
          </ZoomSelectWrap>
          <PlainButton aria-label="Uzaklaştır"><ZoomOut size={14} strokeWidth={1.600} color="#c9c8c7" /></PlainButton>
          <ZoomRange type="range" aria-label="Yakınlaştırma düzeyi" min={0} max={100} defaultValue={10} />
          <PlainButton aria-label="Yakınlaştır"><ZoomIn size={14} strokeWidth={1.600} color="#b4d3dc" /></PlainButton>
        </StatusRight>
      </StatusBar>

      <Taskbar>
        <TaskCluster>
          <StartButton aria-label="Başlat"><WindowsIcon /></StartButton>
          <SearchBox>
            <Search size={13} strokeWidth={2.400} />
            <input type="search" placeholder="Ara" aria-label="Ara" />
          </SearchBox>
          <AppStrip>
            {taskApps.map((a) => (
              <TaskApp key={a.name} aria-label={a.name} $running={a.running} $active={a.active}>
                {a.icon}
              </TaskApp>
            ))}
          </AppStrip>
        </TaskCluster>
        <Tray>
          <TrayButton aria-label="Gizli simgeler" $width={18}><Chevron up size={9} /></TrayButton>
          <TrayButton aria-label="Mikrofon" $width={22}><Mic size={14} strokeWidth={1.600} color="#b9c7c0" /></TrayButton>
          <TrayText><span>TUR</span><span>TRQ</span></TrayText>
          <TrayButton aria-label="Ağ" $width={16}><Wifi size={15} strokeWidth={2.200} /></TrayButton>
          <TrayButton aria-label="Ses" $width={10}>
            <Svg $w={13} viewBox="0 0 13 13" fill="none" stroke="#eef2f0" strokeWidth="1.200" strokeLinejoin="round">
              <path d="M1 4.500h2L6 1.500v10l-3-3H1Z" />
              <path d="M8 4.500c1 1.200 1 2.800 0 4" />
              <path d="M10 2.500c2.200 2.400 2.200 5.600 0 8" stroke="#64776d" />
            </Svg>
          </TrayButton>
          <TrayButton aria-label="Pil" $width={22}>
            <Svg $w={15} $h={12} viewBox="0 0 15 12" fill="none" stroke="#eef2f0" strokeWidth="1.200">
              <path d="M6.500 2.500h4.500A1.500 1.500 0 0 1 12.500 4v5a1.500 1.500 0 0 1-1.500 1.500H3A1.500 1.500 0 0 1 1.500 9V8M14 5v3" />
              <path d="M2 .5v2M4.500 .5v2M1 3h4.500v2L3.300 7 1 5Z" fill="#eef2f0" strokeWidth=".8" />
              <path d="M3.500 8.500h3.500V5.500" />
            </Svg>
          </TrayButton>
          <TrayText $end><span>10:36 PM</span><span>12/30/2025</span></TrayText>
          <TrayButton aria-label="Bildirimler" $width={13}>
            <Svg $w={13} $h={14} viewBox="0 0 13 14">
              <path d="M6 1C3.500 1 2 3 2 5.500v3L.8 11h10.400L10 8.500V7L13 2 8 1.500Z" fill="#f0f4f2" />
              <path d="M4 12h4c-.5 2-3.500 2-4 0Z" fill="#f0f4f2" />
              <path d="M4.500 4.500h2.500l-2.500 4H7M8.500 2h3L8.500 5.500h3" fill="none" stroke="#273e34" strokeWidth=".9" />
            </Svg>
          </TrayButton>
        </Tray>
      </Taskbar>
    </Window>
  );
}
